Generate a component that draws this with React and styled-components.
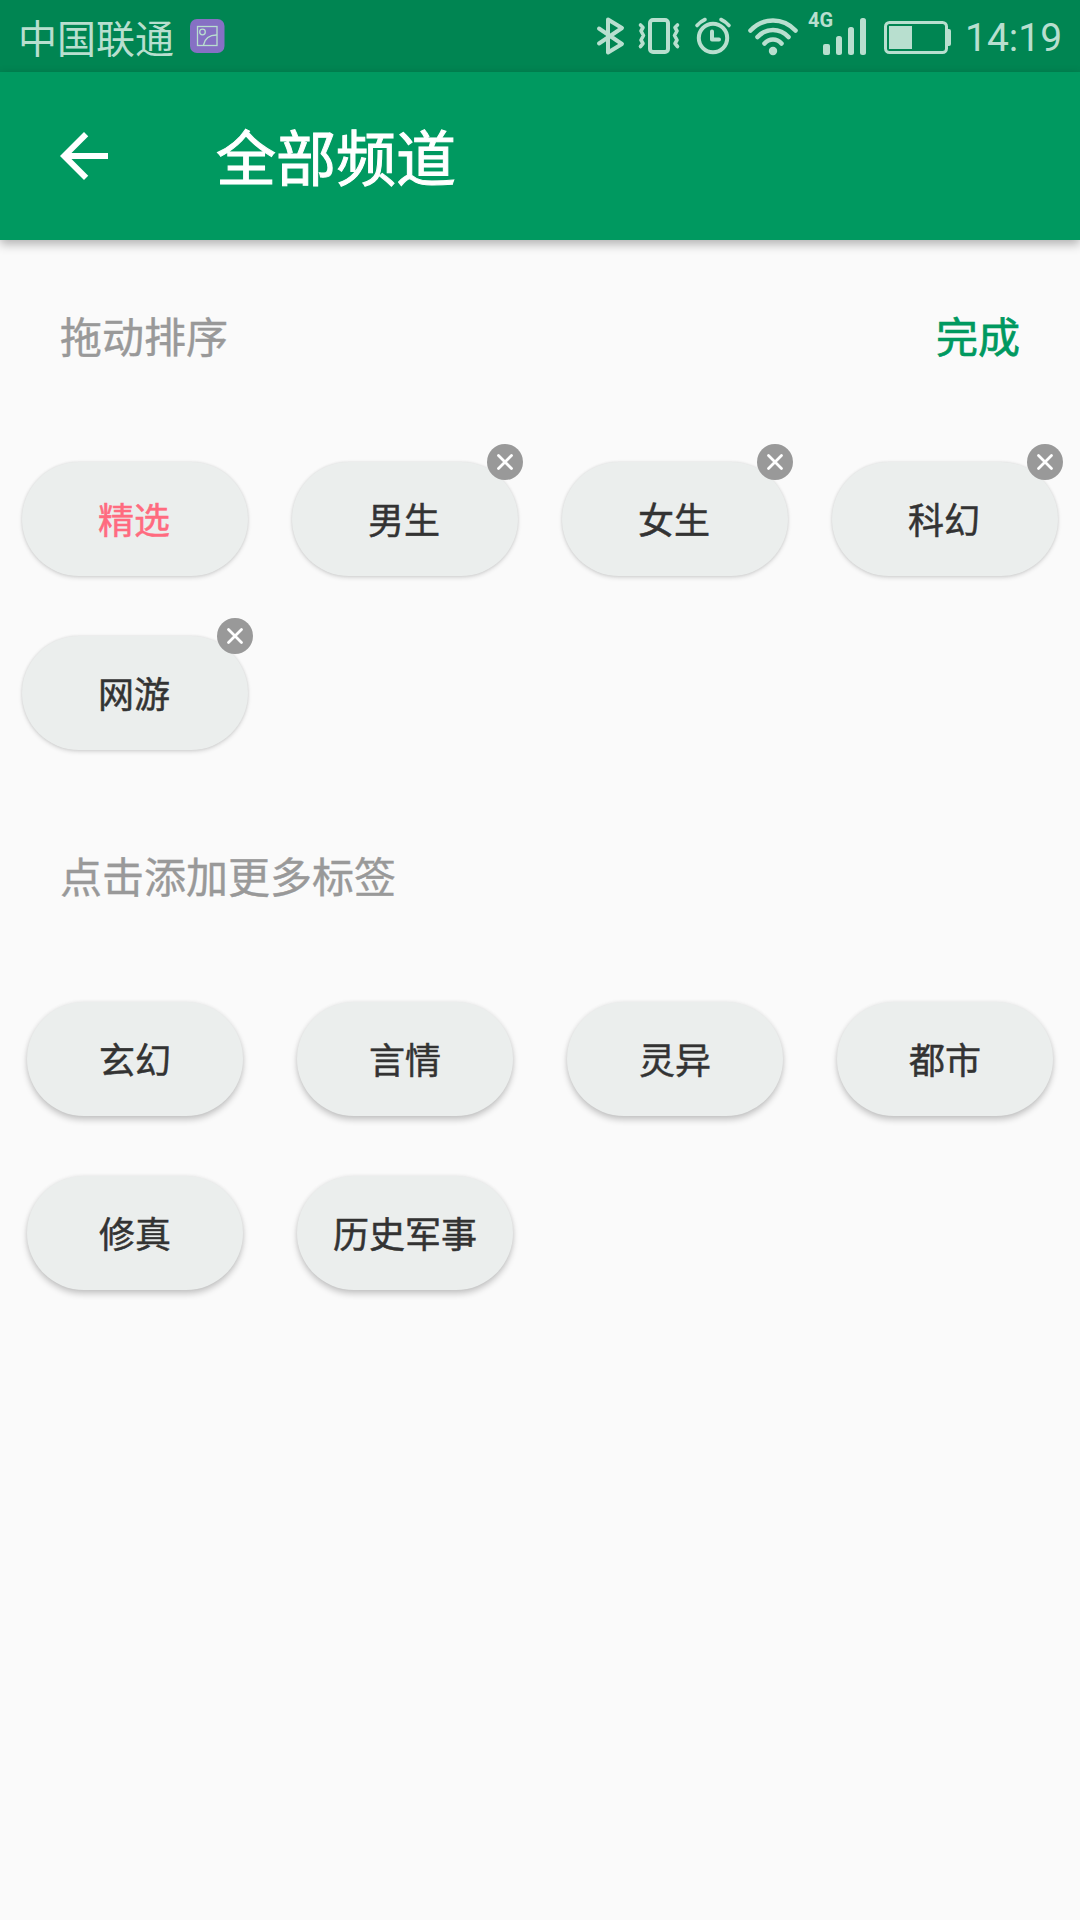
import React from "react";
import styled, { createGlobalStyle } from "styled-components";

const GlobalStyle = createGlobalStyle`
  * { box-sizing: border-box; }
  body {
    margin: 0;
    background: #fafafa;
    font-family: "Noto Sans CJK SC", sans-serif;
    color: #333;
  }
`;

const INK = "#b8dfcf";

const Screen = styled.div`
  width: 1080px;
  height: 1920px;
  overflow: hidden;
  background: #fafafa;
`;

const StatusBar = styled.div`
  display: flex;
  height: 72px;
  padding: 0 17px 0 18px;
  background: #008552;
  color: ${INK};
`;

const Carrier = styled.span`
  width: 157px;
  font: 400 39px/72px "Noto Sans CJK SC", sans-serif;
  white-space: nowrap;
`;

const Icons = styled.div`
  display: flex;
  margin-left: auto;
`;

const Clock = styled.span`
  width: 98px;
  margin-left: 5px;
  font: 400 39px/76px Roboto, sans-serif;
  white-space: nowrap;
`;

const AppBar = styled.header`
  position: relative;
  display: flex;
  align-items: center;
  height: 168px;
  padding-left: 48px;
  background: #009960;
  box-shadow: 0 4px 10px rgba(0, 0, 0, 0.3);
`;

const BackButton = styled.button`
  display: flex;
  width: 72px;
  height: 72px;
  padding: 0;
  border: 0;
  background: none;
`;

const Title = styled.h1`
  margin: 0 0 0 96px;
  padding-bottom: 2px;
  font-size: 60px;
  line-height: 84px;
  font-weight: 400;
  -webkit-text-stroke: 1px #fff;
  color: #fff;
`;

const SectionHead = styled.div`
  display: flex;
  align-items: center;
  justify-content: space-between;
  height: 192px;
  padding: 0 60px 3px;
  font-size: 42px;
  line-height: 60px;
  color: #999;
  -webkit-text-stroke: 0.4px currentColor;
`;

const Done = styled.span`
  color: #009960;
  -webkit-text-stroke: 0.7px currentColor;
`;

const Grid = styled.div`
  display: grid;
  grid-template-columns: repeat(4, 270px);
  grid-auto-rows: 174px;
  place-items: center;
`;

const Chip = styled.div`
  position: relative;
  display: flex;
  align-items: center;
  justify-content: center;
  width: ${(p) => (p.$raised ? 216 : 226)}px;
  height: 114px;
  padding: 0 ${(p) => (p.$raised ? 0 : 2)}px 2px 0;
  border-radius: 58px;
  background: #ebeeed;
  color: ${(p) => (p.$active ? "#ff6b7f" : "#333")};
  font-size: 36px;
  line-height: 52px;
  -webkit-text-stroke: 0.5px currentColor;
  box-shadow: ${(p) =>
    p.$raised
      ? "0 4px 6px rgba(0,0,0,.2), 0 0 4px rgba(0,0,0,.07)"
      : "0 2px 4px rgba(0,0,0,.13), 0 0 3px rgba(0,0,0,.1)"};
`;

const Remove = styled.svg`
  position: absolute;
  top: -18px;
  right: -5px;
  width: 36px;
  height: 36px;
`;

/* Status glyphs share one 72px-high strip; each draws its own slice of it. */
const Glyph = ({ x, w, children }) => (
  <svg
    width={w}
    height="72"
    viewBox={`${x} 0 ${w} 72`}
    fill="none"
    stroke={INK}
    strokeWidth="4"
    strokeLinecap="round"
    strokeLinejoin="round"
  >
    {children}
  </svg>
);

const RemoveBadge = () => (
  <Remove viewBox="0 0 36 36">
    <circle cx="18" cy="18" r="18" fill="#999" />
    <path d="M11.5 11.5 24.5 24.5M24.5 11.5 11.5 24.5" stroke="#fff" strokeWidth="2.8" strokeLinecap="round" />
  </Remove>
);

const mine = ["精选", "男生", "女生", "科幻", "网游"];
const more = ["玄幻", "言情", "灵异", "都市", "修真", "历史军事"];

export default function App() {
  return (
    <Screen>
      <GlobalStyle />
      <StatusBar>
        <Carrier>中国联通</Carrier>
        <Glyph x={175} w={55}>
          <rect x="190" y="19" width="34.5" height="34" rx="7" fill="#8670c4" stroke="none" />
          <g strokeWidth="1.3" strokeLinejoin="miter">
            <rect x="197.5" y="26.5" width="19.5" height="19" />
            <circle cx="202.5" cy="32" r="2.8" />
            <path d="M203.5 45C205 38 210 35 216.5 35" />
          </g>
        </Glyph>
        <Icons>
          <Glyph x={590} w={42}>
            <path d="M599 28.500 622 44 608 52.500V19.500L622 28 599 43.500" />
          </Glyph>
          <Glyph x={632} w={55}>
            <rect x="650" y="20" width="18" height="32" rx="3" />
            <path d="M640.500 25l2.500 2.500-2 3.500 2.500 4.500-2.500 4.500 2 3.500-2.500 3M677.500 25l-2.500 2.500 2 3.500-2.500 4.500 2.500 4.500-2 3.500 2.500 3" strokeWidth="3.6" />
          </Glyph>
          <Glyph x={687} w={53}>
            <circle cx="713" cy="38" r="14.200" />
            <path d="M712 31.500V39.500H719" />
            <path d="M697 25.500Q700.500 21.500 705 19.500M729 25.500Q725.500 21.500 721 19.500" strokeWidth="3.6" />
          </Glyph>
          <Glyph x={740} w={63}>
            <path d="M750.500 30.500Q760 20.500 773 20.500T795.500 30.500M757.500 37Q764 30 773 30T788.500 37M764.500 43.500Q768 39.500 773 39.500T781.500 43.500" strokeWidth="4.6" />
            <circle cx="773" cy="51" r="4.200" fill={INK} stroke="none" />
          </Glyph>
          <Glyph x={803} w={72}>
            <g fill={INK} stroke="none">
              <text x="808" y="27" fontSize="20" fontWeight="700" fontFamily="Roboto">4G</text>
              <rect x="823" y="44" width="7" height="11" rx="2" />
              <rect x="836" y="36" width="6" height="19" rx="2.500" />
              <rect x="848" y="27" width="6" height="28" rx="2.500" />
              <rect x="860" y="18" width="6" height="37" rx="2.500" />
            </g>
          </Glyph>
          <Glyph x={875} w={85}>
            <rect x="885.500" y="22.500" width="61" height="30" rx="4" strokeWidth="3" />
            <rect x="889" y="26" width="23" height="23" fill={INK} stroke="none" />
            <path d="M947 29h2q2 0 2 2v13q0 2-2 2h-2z" fill={INK} stroke="none" />
          </Glyph>
          <Clock>14:19</Clock>
        </Icons>
      </StatusBar>
      <AppBar>
        <BackButton aria-label="返回">
          <svg width="72" height="72" viewBox="0 0 24 24" fill="#fff">
            <path d="M20 11H7.830l5.590-5.590L12 4l-8 8 8 8 1.410-1.410L7.830 13H20v-2z" />
          </svg>
        </BackButton>
        <Title>全部频道</Title>
      </AppBar>
      <SectionHead>
        <span>拖动排序</span>
        <Done>完成</Done>
      </SectionHead>
      <Grid>
        {mine.map((name, i) => (
          <Chip key={name} $active={i === 0}>
            {name}
            {i > 0 && <RemoveBadge />}
          </Chip>
        ))}
      </Grid>
      <SectionHead>
        <span>点击添加更多标签</span>
      </SectionHead>
      <Grid>
        {more.map((name) => (
          <Chip key={name} $raised>
            {name}
          </Chip>
        ))}
      </Grid>
    </Screen>
  );
}
